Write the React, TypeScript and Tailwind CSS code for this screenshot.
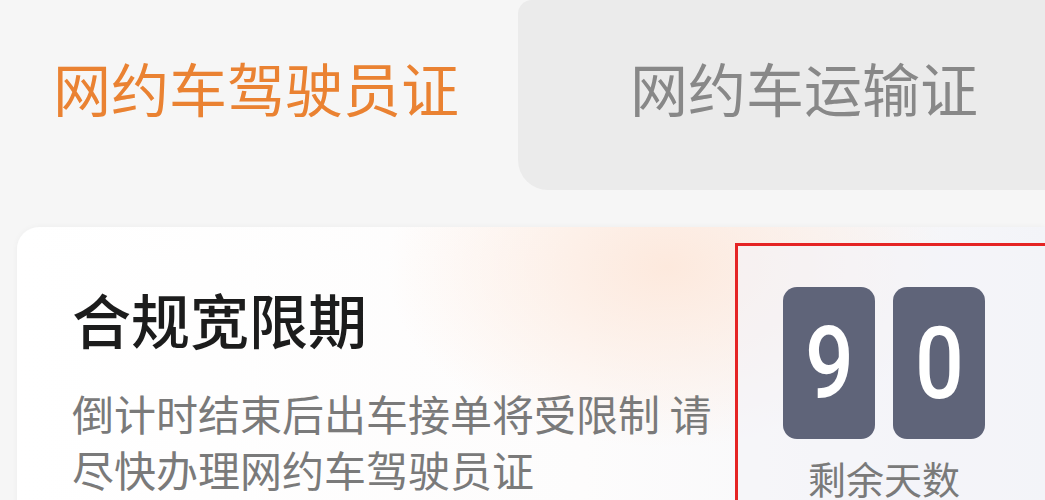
const cjk = { fontFamily: '"Noto Sans CJK SC", "Noto Sans", sans-serif' };

function DigitTile({ value }: { value: string }) {
  return (
    <div className="w-[92px] h-[152px] rounded-[14px] bg-[#5f6479] flex items-center justify-center">
      <span
        className="inline-block text-white text-[100px] leading-none font-medium scale-x-[0.86] mt-[2px]"
        style={{ fontFamily: 'Roboto, "Liberation Sans", sans-serif' }}
      >
        {value}
      </span>
    </div>
  );
}

export default function App() {
  return (
    <div className="w-[1045px] h-[500px] overflow-hidden bg-[#f6f6f6]" style={cjk}>
      {/* tabs */}
      <div className="flex h-[190px]">
        <div className="w-[518px] flex items-center justify-center pb-[16px] pr-[6px]">
          <span className="text-[58px] leading-none text-[#ea8232]">网约车驾驶员证</span>
        </div>
        <div className="flex-1 bg-[#ebebeb] rounded-bl-[30px] rounded-tl-[14px] flex items-center pl-[112px] pb-[16px]">
          <span className="text-[58px] leading-none text-[#888888]">网约车运输证</span>
        </div>
      </div>

      {/* card */}
      <div className="mt-[37px] ml-[17px] h-[280px] rounded-tl-[22px] flex bg-[radial-gradient(ellipse_280px_180px_at_650px_40px,#fde9dd_0%,rgba(253,233,221,0)_100%),linear-gradient(90deg,#ffffff_0%,#fdfcfc_55%,#f3f4f8_100%)] shadow-[0_0_6px_rgba(0,0,0,0.04)]">
        <div className="w-[718px] shrink-0 pl-[55px] pt-[52px]">
          <div className="text-[59px] leading-[80px] font-medium text-[#1c1c1c]">合规宽限期</div>
          <div className="mt-[26px] text-[42px] leading-[56px] text-[#7a7a7a] whitespace-nowrap">
            倒计时结束后出车接单将受限制 请
            <br />
            尽快办理网约车驾驶员证
          </div>
        </div>
        <div className="mt-[16px] w-[340px] shrink-0 border-[3px] border-[#e52424] bg-[#f3f4f8]/60 pl-[45px] pt-[41px]">
          <div className="flex gap-[18px]">
            <DigitTile value="9" />
            <DigitTile value="0" />
          </div>
          <div className="w-[202px] mt-[20px] text-center text-[38px] leading-none text-[#7a7a7a]">剩余天数</div>
        </div>
      </div>
    </div>
  );
}
